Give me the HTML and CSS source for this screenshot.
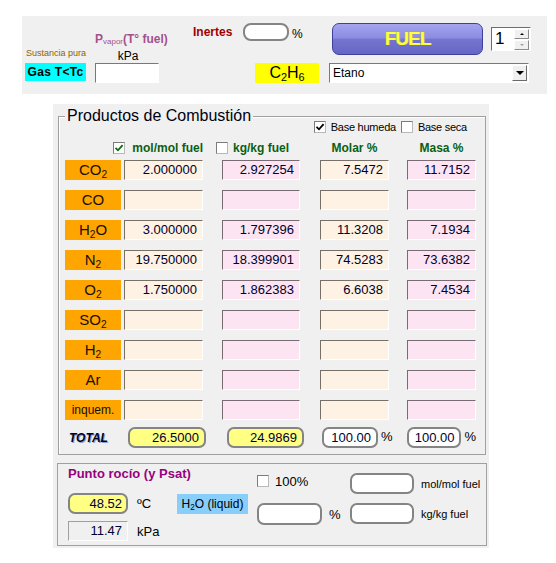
FILE: index.html
```html
<!DOCTYPE html>
<html lang="es">
<head>
<meta charset="utf-8">
<title>Productos de Combustión</title>
<link rel="stylesheet" href="styles.css">
</head>
<body>
<div class="top">
  <div class="colA">
    <div class="sust">Sustancia pura</div>
    <div class="gas">Gas T&lt;Tc</div>
  </div>
  <div class="colB">
    <div class="pvap">P<span class="vsub">vapor</span>(T° fuel)</div>
    <div class="kpa">kPa</div>
    <div class="in-white"></div>
  </div>
  <div class="colC">
    <div class="row1">
      <span class="inertes">Inertes</span>
      <span class="rbox r-inert"></span>
      <span class="pct">%</span>
    </div>
    <div class="c2h6">C<span class="sub">2</span>H<span class="sub">6</span></div>
  </div>
  <div class="colD">
    <div class="row1">
      <div class="fuel">FUEL</div>
      <div class="spin">
        <span class="spin-val">1</span>
        <div class="spin-btns">
          <span class="sbtn"><span class="tri-up"></span></span>
          <span class="sbtn"><span class="tri-down"></span></span>
        </div>
      </div>
    </div>
    <div class="select">
      <span class="sel-text">Etano</span>
      <span class="sel-btn"><span class="tri-sel"></span></span>
    </div>
  </div>
</div>

<div class="products">
  <div class="group">
    <div class="ghead">
      <span class="legend">Productos de Combustión</span>
      <div class="bases">
        <span class="cb"><svg viewBox="0 0 10 10" width="10" height="10"><path d="M1.5 4.8 L4 7.3 L8.6 2.2" fill="none" stroke="#000" stroke-width="1.8"/></svg></span>
        <span class="blabel">Base humeda</span>
        <span class="cb cb2"></span>
        <span class="blabel">Base seca</span>
      </div>
    </div>

    <div class="hgrid">
      <div></div>
      <div class="h-mol"><span class="cb"><svg viewBox="0 0 10 10" width="10" height="10"><path d="M1.5 4.8 L4 7.3 L8.6 2.2" fill="none" stroke="#0a6a0a" stroke-width="1.8"/></svg></span><span class="htxt">mol/mol fuel</span></div>
      <div class="h-kg"><span class="cb"></span><span class="htxt">kg/kg fuel</span></div>
      <div class="h-c htxt">Molar %</div>
      <div class="h-c htxt">Masa %</div>
    </div>

    <div class="dgrid">
      <div class="lab">CO<span class="sub">2</span></div>
      <div class="in cream w79">2.000000</div>
      <div class="in pink w78">2.927254</div>
      <div class="in cream w69">7.5472</div>
      <div class="in pink w69">11.7152</div>

      <div class="lab">CO</div>
      <div class="in cream w79"></div>
      <div class="in pink w78"></div>
      <div class="in cream w69"></div>
      <div class="in pink w69"></div>

      <div class="lab">H<span class="sub">2</span>O</div>
      <div class="in cream w79">3.000000</div>
      <div class="in pink w78">1.797396</div>
      <div class="in cream w69">11.3208</div>
      <div class="in pink w69">7.1934</div>

      <div class="lab">N<span class="sub">2</span></div>
      <div class="in cream w79">19.750000</div>
      <div class="in pink w78">18.399901</div>
      <div class="in cream w69">74.5283</div>
      <div class="in pink w69">73.6382</div>

      <div class="lab">O<span class="sub">2</span></div>
      <div class="in cream w79">1.750000</div>
      <div class="in pink w78">1.862383</div>
      <div class="in cream w69">6.6038</div>
      <div class="in pink w69">7.4534</div>

      <div class="lab">SO<span class="sub">2</span></div>
      <div class="in cream w79"></div>
      <div class="in pink w78"></div>
      <div class="in cream w69"></div>
      <div class="in pink w69"></div>

      <div class="lab">H<span class="sub">2</span></div>
      <div class="in cream w79"></div>
      <div class="in pink w78"></div>
      <div class="in cream w69"></div>
      <div class="in pink w69"></div>

      <div class="lab">Ar</div>
      <div class="in cream w79"></div>
      <div class="in pink w78"></div>
      <div class="in cream w69"></div>
      <div class="in pink w69"></div>

      <div class="lab small">inquem.</div>
      <div class="in cream w79"></div>
      <div class="in pink w78"></div>
      <div class="in cream w69"></div>
      <div class="in pink w69"></div>
    </div>

    <div class="tgrid">
      <div class="total">TOTAL</div>
      <div><span class="rbox yellow t1">26.5000</span></div>
      <div><span class="rbox yellow t2">24.9869</span></div>
      <div class="tcell"><span class="rbox white t3">100.00</span><span class="tpct">%</span></div>
      <div class="tcell"><span class="rbox white t4">100.00</span><span class="tpct">%</span></div>
    </div>
  </div>

  <div class="dew">
    <div class="dew-left">
      <div class="dtitle">Punto rocío (y Psat)</div>
      <div class="drow1">
        <span class="rbox yellow d1">48.52</span>
        <span class="dunit">ºC</span>
        <span class="h2o">H<span class="sub">2</span>O (liquid)</span>
      </div>
      <div class="drow2">
        <span class="flat">11.47</span>
        <span class="dunit">kPa</span>
      </div>
    </div>
    <div class="dew-right">
      <div class="dcell"><span class="cb cb100"></span><span class="t100">100%</span></div>
      <div class="dcell"><span class="rbox white e1"></span><span class="elab">mol/mol fuel</span></div>
      <div class="dcell"><span class="rbox white e2"></span><span class="epct">%</span></div>
      <div class="dcell"><span class="rbox white e1"></span><span class="elab">kg/kg fuel</span></div>
    </div>
  </div>
</div>
</body>
</html>
```
FILE: styles.css
```css
* { box-sizing: border-box; }
body {
  margin: 0;
  background: #fff;
  font-family: "Liberation Sans", Arial, sans-serif;
  color: #000;
}
.sub {
  font-size: 0.68em;
  vertical-align: -0.3em;
  line-height: 0;
}

/* ---------- top panel ---------- */
.top {
  display: flex;
  margin: 16px 0 0 22px;
  width: 525px;
  height: 78px;
  background: #f0f0f0;
}
.colA {
  margin-left: 3px;
  width: 61px;
  padding-top: 32px;
  display: flex;
  flex-direction: column;
}
.sust {
  font-size: 9px;
  line-height: 11px;
  color: #8a6400;
  text-align: center;
  white-space: nowrap;
  margin-left: 1px;
}
.gas {
  margin-top: 4px;
  height: 18px;
  background: #00ffff;
  font-weight: bold;
  font-size: 12px;
  line-height: 18px;
  text-align: center;
  letter-spacing: 0.3px;
}
.colB {
  margin-left: 9px;
  width: 64px;
  padding-top: 16px;
}
.pvap {
  font-size: 12px;
  line-height: 14px;
  font-weight: bold;
  color: #a4508c;
  white-space: nowrap;
}
.vsub {
  font-size: 8px;
  font-weight: normal;
  vertical-align: -1px;
  line-height: 0;
}
.kpa {
  margin-top: 3px;
  font-size: 12px;
  line-height: 14px;
  text-align: center;
  padding-left: 2px;
}
.in-white {
  width: 64px;
  height: 20px;
  background: #fff;
  border-style: solid;
  border-width: 1px;
  border-color: #787878 #fff #fff #787878;
}
.colC {
  margin-left: 34px;
  width: 127px;
  padding-top: 7px;
}
.row1 {
  display: flex;
  align-items: center;
}
.inertes {
  width: 50px;
  font-size: 12px;
  font-weight: bold;
  color: #a00000;
}
.rbox {
  display: inline-block;
  border: 2px solid #848484;
  border-radius: 7px;
  background: #fff;
  font-size: 13px;
  text-align: right;
  color: #000030;
}
.r-inert {
  width: 46px;
  height: 18px;
  border-radius: 8px;
}
.pct {
  margin-left: 3px;
  margin-top: 4px;
  font-size: 12px;
}
.c2h6 {
  margin-top: 22px;
  margin-left: 62px;
  width: 64px;
  height: 20px;
  background: #ffff00;
  font-size: 16px;
  line-height: 20px;
  text-align: center;
}
.colD {
  margin-left: 9px;
  width: 202px;
  padding-top: 7px;
}
.colD .row1 { align-items: flex-start; }
.fuel {
  margin-left: 3px;
  width: 151px;
  height: 32px;
  border: 1px solid #3f3f9e;
  border-radius: 7px;
  background: linear-gradient(to bottom, #a4a4ee 0%, #8c8ce2 46%, #7474d0 52%, #6666c4 100%);
  color: #ffff3c;
  font-weight: bold;
  font-size: 19px;
  letter-spacing: -1px;
  line-height: 30px;
  text-align: center;
  text-shadow: 1px 0 0 #a8a860;
}
.spin {
  margin-left: 8px;
  margin-top: 4px;
  width: 40px;
  height: 24px;
  background: #fff;
  border-style: solid;
  border-width: 1px;
  border-color: #6e6e6e #fff #fff #6e6e6e;
  display: flex;
}
.spin-val {
  font-size: 17px;
  line-height: 22px;
  padding-left: 3px;
  width: 22px;
}
.spin-btns {
  margin-top: 1px;
  display: flex;
  flex-direction: column;
  gap: 1px;
}
.sbtn {
  width: 15px;
  height: 10px;
  background: #f0f0f0;
  border-style: solid;
  border-width: 1px;
  border-color: #fff #8a8a8a #8a8a8a #fff;
  display: flex;
  align-items: center;
  justify-content: center;
}
.tri-up {
  width: 0; height: 0;
  border-left: 2px solid transparent;
  border-right: 2px solid transparent;
  border-bottom: 2px solid #000;
}
.tri-down {
  width: 0; height: 0;
  border-left: 2px solid transparent;
  border-right: 2px solid transparent;
  border-top: 2px solid #a0a0a0;
}
.select {
  margin-top: 8px;
  width: 200px;
  height: 20px;
  background: #fff;
  border-style: solid;
  border-width: 1px;
  border-color: #7a7a7a #fff #fff #7a7a7a;
  display: flex;
  align-items: center;
  justify-content: space-between;
}
.sel-text {
  font-size: 12px;
  padding-left: 3px;
}
.sel-btn {
  width: 15px;
  height: 16px;
  margin-right: 1px;
  background: #f0f0f0;
  border-style: solid;
  border-width: 1px;
  border-color: #fff #6a6a6a #6a6a6a #fff;
  display: flex;
  align-items: center;
  justify-content: center;
}
.tri-sel {
  width: 0; height: 0;
  border-left: 4px solid transparent;
  border-right: 4px solid transparent;
  border-top: 4px solid #000;
}

/* ---------- products ---------- */
.products {
  margin: 10px 0 0 53px;
  width: 436px;
  background: #f0f0f0;
  padding: 12px 0 2px 0;
}
.group {
  margin-left: 5px;
  width: 428px;
  border: 1px solid #a0a0a0;
  box-shadow: inset 1px 1px 0 #fff;
  padding: 0 0 6px 0;
}
.ghead {
  display: flex;
  align-items: flex-start;
}
.legend {
  margin-top: -10px;
  margin-left: 6px;
  padding: 0 2px;
  background: #f0f0f0;
  font-size: 16px;
  line-height: 18px;
  color: #000010;
  white-space: nowrap;
}
.bases {
  margin-left: auto;
  margin-right: 18px;
  margin-top: 4px;
  height: 12px;
  display: flex;
  align-items: center;
}
.cb {
  display: inline-flex;
  align-items: center;
  justify-content: center;
  width: 12px;
  height: 12px;
  background: #fff;
  border: 1px solid #7c7c7c;
  border-right-color: #b8b8b8;
  border-bottom-color: #b8b8b8;
  flex: none;
}
.blabel {
  font-size: 11px;
  letter-spacing: -0.25px;
  margin-left: 5px;
  white-space: nowrap;
}
.cb2 { margin-left: 5px; }

.hgrid, .dgrid, .tgrid {
  display: grid;
  grid-template-columns: 59px 98px 98px 87px 69px;
  padding-left: 6px;
}
.hgrid {
  margin-top: 8px;
  height: 14px;
  align-items: center;
  margin-bottom: 5px;
}
.htxt {
  font-size: 12px;
  font-weight: bold;
  color: #0b5f12;
  white-space: nowrap;
}
.h-mol {
  width: 79px;
  display: flex;
  align-items: center;
  justify-content: flex-end;
  gap: 7px;
}
.h-kg {
  margin-left: -6px;
  display: flex;
  align-items: center;
  gap: 5px;
}
.h-c {
  width: 69px;
  text-align: center;
}
.dgrid {
  row-gap: 10px;
}
.lab {
  width: 56px;
  height: 20px;
  background: #ffa500;
  font-size: 15px;
  line-height: 20px;
  text-align: center;
  color: #1a1000;
}
.lab.small { font-size: 12px; }
.in {
  height: 20px;
  border-style: solid;
  border-width: 1px;
  font-size: 13px;
  line-height: 18px;
  text-align: right;
  padding-right: 5px;
  color: #000030;
}
.cream {
  background: #fdf2e3;
  border-color: #767068 #fff #fff #767068;
}
.pink {
  background: #fde4f2;
  border-color: #7a6a74 #fff #fff #7a6a74;
}
.w79 { width: 79px; }
.w78 { width: 78px; }
.w69 { width: 69px; }

.tgrid {
  margin-top: 7px;
  align-items: center;
}
.total {
  padding-left: 4px;
  font-size: 12px;
  font-weight: bold;
  font-style: italic;
  color: #000020;
  text-shadow: 1px 1px 0 #8a9ad0;
}
.rbox.yellow { background: #ffff84; }
.t1, .t2, .t3, .t4 {
  height: 21px;
  line-height: 17px;
  padding-right: 5px;
  vertical-align: top;
}
.t1 { width: 78px; margin-left: 4px; }
.t2 { width: 77px; margin-left: 5px; }
.t3 { width: 56px; margin-left: 2px; }
.t4 { width: 56px; }
.tcell {
  display: flex;
  align-items: center;
  white-space: nowrap;
}
.tpct {
  margin-left: 3px;
  font-size: 13px;
  margin-top: -3px;
}

/* ---------- dew point ---------- */
.dew {
  margin: 8px 0 0 4px;
  width: 430px;
  height: 83px;
  border: 1px solid #a0a0a0;
  display: flex;
}
.dew-left {
  width: 190px;
  padding: 2px 0 0 10px;
}
.dtitle {
  font-size: 13px;
  font-weight: bold;
  line-height: 16px;
  color: #990080;
  white-space: nowrap;
}
.drow1 {
  margin-top: 11px;
  height: 21px;
  display: flex;
  align-items: center;
}
.d1 {
  width: 60px;
  height: 21px;
  line-height: 17px;
  padding-right: 4px;
}
.dunit {
  margin-left: 9px;
  width: 40px;
  font-size: 13px;
}
.h2o {
  width: 71px;
  height: 20px;
  background: #87cefa;
  font-size: 12px;
  line-height: 20px;
  text-align: center;
  white-space: nowrap;
}
.drow2 {
  margin-top: 7px;
  height: 20px;
  display: flex;
  align-items: center;
}
.flat {
  width: 60px;
  height: 20px;
  border-style: solid;
  border-width: 1px;
  border-color: #a0a0a0 #fff #fff #a0a0a0;
  font-size: 13px;
  line-height: 18px;
  text-align: right;
  padding-right: 5px;
  color: #000030;
}
.dew-right {
  margin-left: 9px;
  padding-top: 9px;
  display: grid;
  grid-template-columns: 93px auto;
  grid-auto-rows: 21px;
  row-gap: 9px;
  align-content: start;
}
.dcell {
  display: flex;
  align-items: center;
  white-space: nowrap;
}
.cb100 {
  align-self: flex-start;
  margin-top: 2px;
}
.t100 {
  margin-left: 6px;
  font-size: 13px;
  align-self: flex-start;
  margin-top: 1px;
}
.e1 { width: 64px; height: 21px; }
.e2 { width: 65px; height: 22px; }
.elab {
  margin-left: 7px;
  font-size: 11px;
}
.epct {
  margin-left: 7px;
  font-size: 13px;
  margin-top: 2px;
}
```
